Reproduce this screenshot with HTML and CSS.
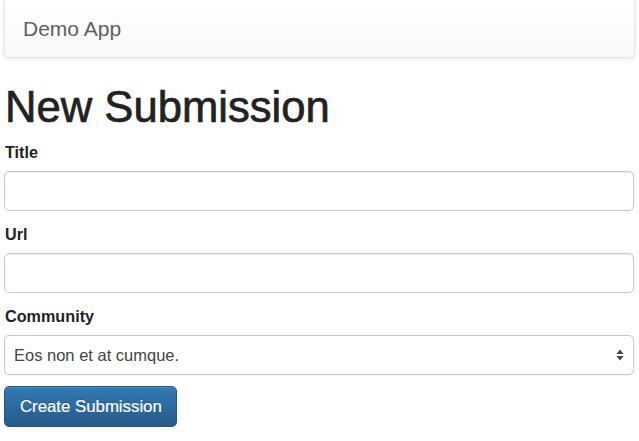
FILE: index.html
```html
<!DOCTYPE html>
<html>
<head>
<meta charset="utf-8">
<link rel="stylesheet" href="styles.css">
</head>
<body>
<nav class="navbar"><a class="brand">Demo App</a></nav>
<main class="page">
  <h1 class="title">New Submission</h1>
  <form class="form">
    <div class="group">
      <label class="label">Title</label>
      <input class="field" type="text">
    </div>
    <div class="group">
      <label class="label">Url</label>
      <input class="field" type="text">
    </div>
    <div class="group last">
      <label class="label">Community</label>
      <div class="select-wrap">
        <select class="field select"><option>Eos non et at cumque.</option></select>
        <svg class="arrows" width="8" height="12" viewBox="0 0 8 12"><path d="M4 0.5 L7.5 5 L0.5 5 Z M4 11.5 L7.5 7 L0.5 7 Z" fill="#444"/></svg>
      </div>
    </div>
    <button class="btn" type="button">Create Submission</button>
  </form>
</main>
</body>
</html>
```
FILE: styles.css
```css
html, body { margin: 0; padding: 0; background: #fff; }
body {
  font-family: "Liberation Sans", Arial, Helvetica, sans-serif;
  color: #333;
  font-size: 16.5px;
}
.navbar {
  margin: 0 4px;
  height: 57px;
  display: flex;
  align-items: center;
  background: linear-gradient(#ffffff, #f8f8f8);
  border: 1px solid #e7e7e7;
  border-top: none;
  border-radius: 0 0 5px 5px;
  box-shadow: inset 0 1px 0 rgba(255,255,255,.15), 0 1px 4px rgba(0,0,0,.1);
}
.brand {
  padding-left: 18px;
  padding-top: 1px;
  font-size: 21px;
  color: #606060;
}
.page { padding: 0 5px 0 4px; }
.title {
  margin: 24px 0 0 1px;
  font-size: 43.6px;
  line-height: 50px;
  font-weight: normal;
  -webkit-text-stroke: 0.7px #222;
  color: #222;
}
.form { margin-top: 10px; display: flex; flex-direction: column; }
.group { display: flex; flex-direction: column; margin-bottom: 13px; }
.group.last { margin-bottom: 11px; }
.label {
  display: block;
  margin: 0 0 9px 1px;
  font-weight: bold;
  font-size: 16.2px;
  line-height: 20px;
  color: #222;
}
.field {
  box-sizing: border-box;
  width: 100%;
  height: 40px;
  margin: 0;
  padding: 0 9px;
  border: 1px solid #c8c8c8;
  border-radius: 5px;
  background: #fff;
  font-family: inherit;
  font-size: 16.5px;
  color: #444;
  box-shadow: inset 0 1px 1px rgba(0,0,0,.075);
  outline: none;
}
.select-wrap { position: relative; }
.select { appearance: none; -webkit-appearance: none; box-shadow: 0 1px 1px rgba(0,0,0,.05); }
.arrows { position: absolute; right: 10px; top: 14px; pointer-events: none; }
.btn {
  align-self: flex-start;
  height: 41px;
  padding: 0 14px 0 15px;
  border: 1px solid #245580;
  border-radius: 5px;
  background: linear-gradient(#337ab7, #265a88);
  color: #fff;
  font-family: inherit;
  font-size: 16.8px;
  -webkit-text-stroke: 0.2px #fff;
  text-shadow: 0 -1px 0 rgba(0,0,0,.2);
  box-shadow: inset 0 1px 0 rgba(255,255,255,.15), 0 1px 1px rgba(0,0,0,.075);
}
```
